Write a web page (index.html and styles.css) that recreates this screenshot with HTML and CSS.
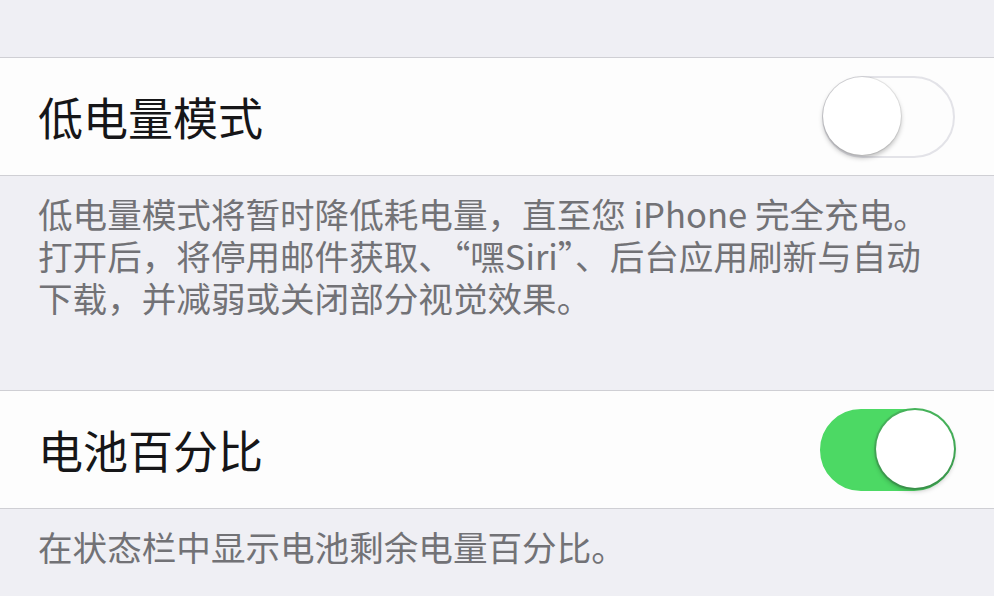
FILE: index.html
```html
<!DOCTYPE html>
<html lang="zh-CN">
<head>
    <meta charset="UTF-8">
    <meta name="viewport" content="width=device-width, initial-scale=1.0">
    <title>电池</title>
    <link rel="stylesheet" href="styles.css">
</head>
<body>
    <!-- Low power mode -->
    <div class="group">
        <div class="row">
            <span class="label">低电量模式</span>
            <span class="switch"><span class="knob"></span></span>
        </div>
        <p class="footer">低电量模式将暂时降低耗电量，直至您 iPhone 完全充电。打开后，将停用邮件获取、“嘿Siri”、后台应用刷新与自动下载，并减弱或关闭部分视觉效果。</p>
    </div>

    <!-- Battery percentage -->
    <div class="group">
        <div class="row">
            <span class="label">电池百分比</span>
            <span class="switch on"><span class="knob"></span></span>
        </div>
        <p class="footer">在状态栏中显示电池剩余电量百分比。</p>
    </div>
</body>
</html>
```

FILE: styles.css
```css
body {
    margin: 0;
    padding: 57px 0 0;
    background: #efeff4;
    font-family: "Noto Sans CJK SC", "Noto Sans", sans-serif;
    overflow: hidden;
}

.group {
    display: flex;
    flex-direction: column;
}

/* Cell */
.row {
    display: flex;
    align-items: center;
    justify-content: space-between;
    height: 117px;
    padding: 0 39px 0 38px;
    background: #fdfdfd;
    border-top: 1px solid #cfcfd4;
    border-bottom: 1px solid #cfcfd4;
}

.label {
    font-size: 45px;
    color: #161618;
    line-height: 1;
}

/* Section footer text */
.footer {
    margin: 0;
    padding: 16px 40px 72px 38px;
    font-size: 34.6px;
    line-height: 42px;
    color: #727276;
}

.group:last-child .footer {
    padding-bottom: 20px;
}

/* Toggle */
.switch {
    position: relative;
    box-sizing: border-box;
    width: 133px;
    height: 82px;
    border-radius: 41px;
    background: #fdfdfd;
    border: 2px solid #e3e3e8;
}

.switch .knob {
    position: absolute;
    top: -1px;
    left: -1px;
    width: 78px;
    height: 78px;
    border-radius: 50%;
    background: #fff;
    box-shadow: 0 3px 5px rgba(0, 0, 0, 0.25), 0 0 0 1px rgba(0, 0, 0, 0.08);
}

.switch.on {
    width: 135px;
    background: #4cd964;
    border-color: #4cd964;
}

.switch.on .knob {
    left: auto;
    right: -1px;
    box-shadow: 0 3px 5px rgba(0, 0, 0, 0.25), 0 0 0 2px #47b55c;
}
```
